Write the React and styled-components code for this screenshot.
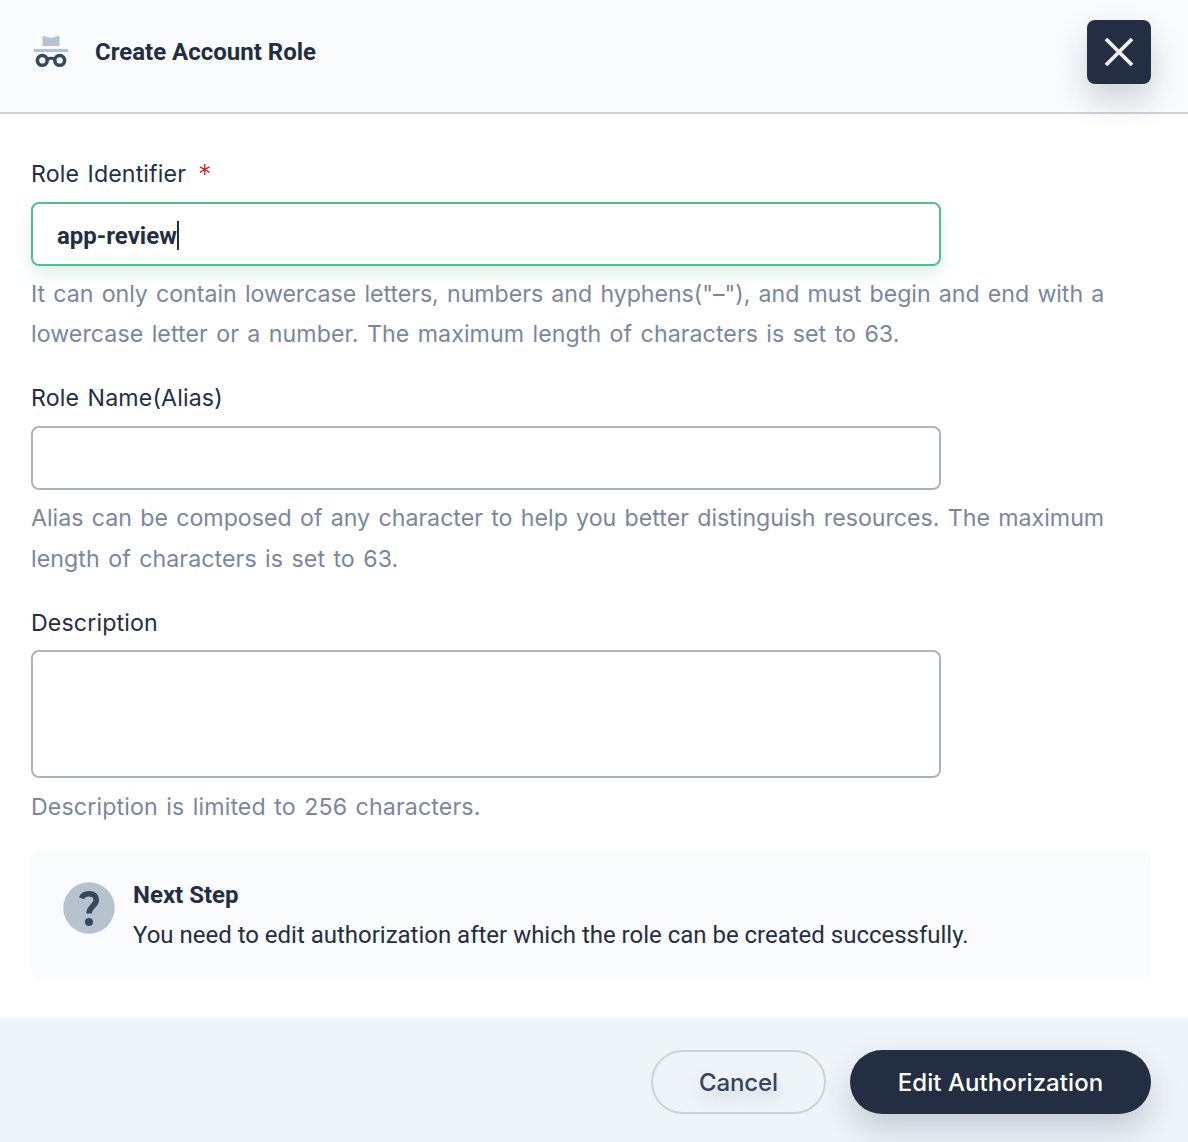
import React from 'react';
import styled, { createGlobalStyle } from 'styled-components';

const GlobalStyle = createGlobalStyle`
  * { box-sizing: border-box; }
  body { margin: 0; background: #fff; }
`;

const Dialog = styled.div`
  width: 1188px;
  height: 1142px;
  display: flex;
  flex-direction: column;
  overflow: hidden;
  background: #fff;
  color: #242e42;
  font-family: Inter, 'Liberation Sans', sans-serif;
  font-size: 24px;
  line-height: 40px;
`;

const Header = styled.header`
  height: 114px;
  padding: 20px 37px 0 31px;
  display: flex;
  align-items: flex-start;
  background: #f9fbfd;
  border-bottom: 2px solid #ccd3db;
`;

const HeaderIcon = styled.svg`
  width: 40px;
  height: 40px;
  margin-top: 12px;
`;

const Title = styled.h1`
  flex: 1;
  margin: 12px 0 0 24px;
  font: 700 24px/40px Roboto, sans-serif;
`;

const CloseButton = styled.button`
  width: 64px;
  height: 64px;
  padding: 0;
  border: 0;
  border-radius: 8px;
  background: #242e42;
  box-shadow: 0 16px 32px rgba(36, 46, 66, 0.2);
  svg { display: block; }
`;

const Form = styled.main`
  height: 904px;
  padding: 40px 37px 0 31px;
`;

const Field = styled.section`
  margin-bottom: 24px;
`;

const Label = styled.label`
  display: block;
  height: 40px;
  margin-bottom: 8px;
  font-size: 23.2px;
  line-height: ${(p) => (p.$low ? 42 : 40)}px;
  white-space: nowrap;
  font-weight: 400;
  word-spacing: 1.8px;
  letter-spacing: ${(p) => p.$spacing || 0}px;
`;

const Required = styled.span`
  margin-left: 12px;
  color: #ca2621;
  font-size: 27px;
  line-height: 1;
  font-weight: 300;
  vertical-align: -2px;
`;

const Control = styled.div`
  width: 910px;
  height: ${(p) => (p.$tall ? 128 : 64)}px;
  padding: 4px 24px 0;
  display: flex;
  align-items: center;
  border: 2px solid ${(p) => (p.$focused ? '#55bc8a' : '#abb4be')};
  border-radius: 8px;
  background: #fff;
  box-shadow: ${(p) => (p.$focused ? '0 8px 16px rgba(85, 188, 138, 0.2)' : 'none')};
  font: 700 24px/40px Roboto, sans-serif;
`;

const Caret = styled.span`
  width: 2px;
  height: 29px;
  margin-bottom: 2px;
  background: #242e42;
`;

const Help = styled.p`
  margin: 8px 0 0;
  color: #79879c;
  font-size: 23.2px;
  font-weight: 400;
  word-spacing: 1.8px;
`;

const Line = styled.span`
  display: block;
  height: 40px;
  line-height: ${(p) => (p.$low ? 42 : 40)}px;
  white-space: nowrap;
  letter-spacing: ${(p) => p.$spacing || 0}px;
`;

const Notice = styled.aside`
  height: 128px;
  padding: 24px 30px;
  display: flex;
  border-radius: 8px;
  background: #f9fbfd;
  font-family: Roboto, sans-serif;
`;

const NoticeIcon = styled.svg`
  width: 56px;
  height: 56px;
  margin: 6px 16px 0 0;
`;

const NoticeTitle = styled.div`
  height: 41px;
  line-height: 42px;
  font-weight: 700;
`;

const NoticeText = styled.div`
  white-space: nowrap;
  letter-spacing: -0.01px;
`;

const Footer = styled.footer`
  height: 124px;
  padding: 32px 37px 0;
  display: flex;
  justify-content: flex-end;
  gap: 24px;
  background: #eff4f9;
`;

const Button = styled.button`
  width: ${(p) => (p.$primary ? 301 : 175)}px;
  height: 64px;
  padding: 2px 0 0;
  border: ${(p) => (p.$primary ? '0' : '2px solid #ccd3db')};
  border-radius: 32px;
  background: ${(p) => (p.$primary ? '#242e42' : 'transparent')};
  color: ${(p) => (p.$primary ? '#fff' : '#36435c')};
  box-shadow: ${(p) => (p.$primary ? '0 16px 32px rgba(36, 46, 66, 0.2)' : 'none')};
  text-shadow: ${(p) => (p.$primary ? 'none' : '0 8px 16px rgba(36, 46, 66, 0.2)')};
  font: 500 24px/40px Inter, sans-serif;
  letter-spacing: ${(p) => p.$spacing || 0}px;
  white-space: nowrap;
`;

export default function App() {
  return (
    <Dialog>
      <GlobalStyle />
      <Header>
        <HeaderIcon viewBox="0 0 40 40">
          <path fill="#b6c2cd" d="M11.500 5q0-1.500 1.500-1L20 6l7-2q1.500-.5 1.500 1V14h-17zM3 17H37v3H3z" />
          <g fill="none" stroke="#36485c" strokeWidth="3.600">
            <circle cx="11.300" cy="28.400" r="4.900" />
            <circle cx="28.700" cy="28.400" r="4.900" />
            <path d="M15.500 27q4.500-1.500 9 0" strokeWidth="3.200" />
          </g>
        </HeaderIcon>
        <Title>Create Account Role</Title>
        <CloseButton aria-label="Close">
          <svg width="64" height="64" viewBox="0 0 64 64">
            <path d="M19 19 45 45M45 19 19 45" stroke="#eff1f3" strokeWidth="3.800" />
          </svg>
        </CloseButton>
      </Header>
      <Form>
        <Field>
          <Label $spacing={0.12}>Role Identifier<Required>*</Required></Label>
          <Control $focused>app-review<Caret /></Control>
          <Help>
            <Line $spacing={-0.05}>It can only contain lowercase letters, numbers and hyphens("–"), and must begin and end with a</Line>
            <Line $spacing={0.06}>lowercase letter or a number. The maximum length of characters is set to 63.</Line>
          </Help>
        </Field>
        <Field>
          <Label $spacing={0.13}>Role Name(Alias)</Label>
          <Control />
          <Help>
            <Line $spacing={-0.01}>Alias can be composed of any character to help you better distinguish resources. The maximum</Line>
            <Line $low $spacing={0.07}>length of characters is set to 63.</Line>
          </Help>
        </Field>
        <Field>
          <Label $low $spacing={0.12}>Description</Label>
          <Control $tall />
          <Help><Line $low $spacing={0.12}>Description is limited to 256 characters.</Line></Help>
        </Field>
        <Notice>
          <NoticeIcon viewBox="0 0 56 56">
            <circle cx="28" cy="28" r="25.700" fill="#b6c2cd" />
            <path d="M20.500 18.200c1.200-3 4-4.500 7.500-4.500 4.600 0 7.300 2.500 7.300 6.200 0 5.700-7.300 6.500-7.300 13.600" fill="none" stroke="#36485c" strokeWidth="5.600" />
            <circle cx="28" cy="42" r="4" fill="#36485c" />
          </NoticeIcon>
          <div>
            <NoticeTitle>Next Step</NoticeTitle>
            <NoticeText>You need to edit authorization after which the role can be created successfully.</NoticeText>
          </div>
        </Notice>
      </Form>
      <Footer>
        <Button $spacing={-0.1}>Cancel</Button>
        <Button $primary $spacing={0.06}>Edit Authorization</Button>
      </Footer>
    </Dialog>
  );
}
